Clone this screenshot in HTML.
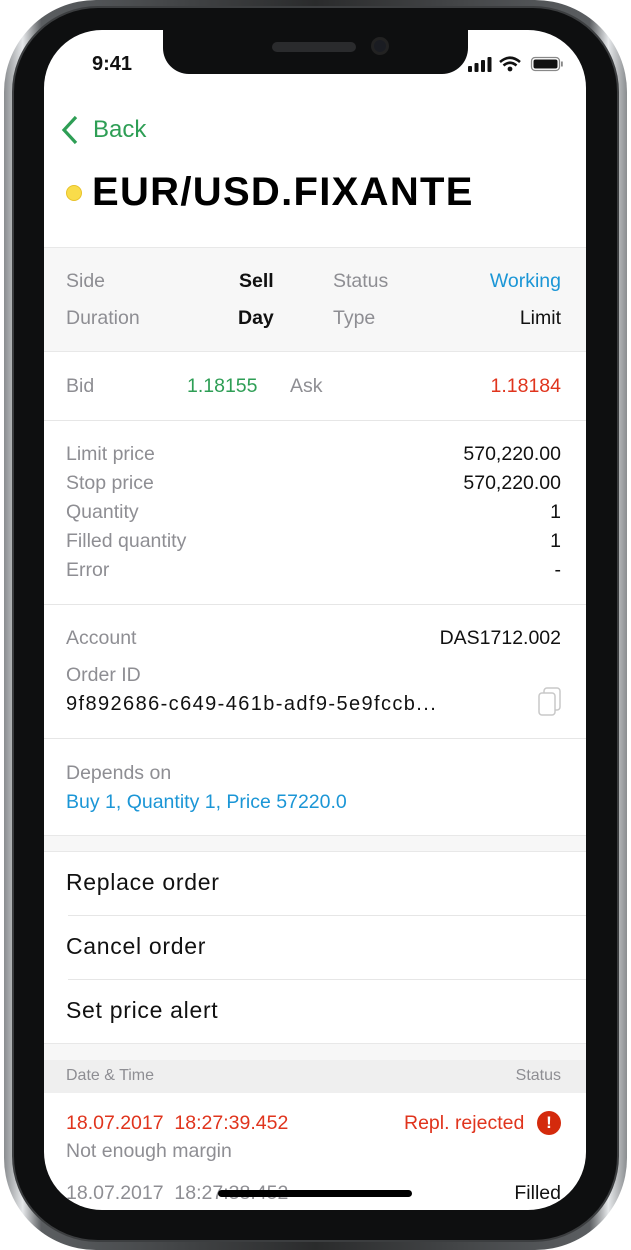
<!DOCTYPE html>
<html><head><meta charset="utf-8"><style>
*{margin:0;padding:0;box-sizing:border-box}
body{width:631px;height:1250px;background:#fff;position:relative;overflow:hidden;font-family:"Liberation Sans",sans-serif}
.a{position:absolute;white-space:nowrap}
#rim{position:absolute;left:4px;top:0;width:623px;height:1250px;border-radius:92px;background:linear-gradient(90deg,#8a8d90,#e6e8ea 3%,#5b5e61 6%,#2a2b2c 50%,#5b5e61 94%,#e6e8ea 97%,#8a8d90)}
#bez{position:absolute;left:12px;top:6px;width:607px;height:1236px;border-radius:86px;background:#0e0f10;border:2px solid #3c3e40}
#scr{position:absolute;left:44px;top:30px;width:542px;height:1180px;border-radius:58px;background:#fff;overflow:hidden}
.s{position:absolute;left:0;width:542px}
.l{color:#8e8e93;font-size:19.5px}
.v{color:#111;font-size:19.5px}
.line{position:absolute;height:1px;background:#e6e6e6}
</style></head><body>
<div id="rim"></div><div id="bez"></div>
<div id="scr">
 <div class="s" style="top:217px;height:105px;background:#f7f7f7;border-top:1px solid #e8e8e8;border-bottom:1px solid #e8e8e8"></div>
 <div class="line" style="left:0;width:542px;top:390px"></div>
 <div class="line" style="left:0;width:542px;top:574px"></div>
 <div class="line" style="left:0;width:542px;top:708px"></div>
 <div class="s" style="top:805px;height:17px;background:#f7f7f7;border-top:1px solid #e8e8e8;border-bottom:1px solid #e8e8e8"></div>
 <div class="line" style="left:24px;width:518px;top:885px"></div>
 <div class="line" style="left:24px;width:518px;top:949px"></div>
 <div class="s" style="top:1013px;height:17px;background:#f7f7f7;border-top:1px solid #e8e8e8"></div>
 <div class="s" style="top:1030px;height:33px;background:#efefef"></div>
</div>
<!-- notch -->
<div class="a" style="left:163px;top:28px;width:305px;height:46px;background:#0e0f10;border-radius:0 0 26px 26px"></div>
<div class="a" style="left:272px;top:42px;width:84px;height:10px;background:#2a2b2d;border-radius:5px"></div>
<div class="a" style="left:371px;top:37px;width:18px;height:18px;background:#1a1c22;border-radius:50%;border:3px solid #222"></div>
<!-- status bar -->
<div class="a" style="left:92px;top:53px;font-size:20px;font-weight:bold;color:#111">9:41</div>
<svg class="a" style="left:468px;top:55px" width="100" height="18" viewBox="0 0 100 18">
<rect x="0" y="11" width="4" height="6" rx="1" fill="#111"/><rect x="6.5" y="8" width="4" height="9" rx="1" fill="#111"/><rect x="13" y="5" width="4" height="12" rx="1" fill="#111"/><rect x="19.5" y="2" width="4" height="15" rx="1" fill="#111"/>
<path d="M32 7 Q42 -1.5 52 7 M35.5 10.5 Q42 5 48.5 10.5" stroke="#111" stroke-width="2.6" fill="none"/><circle cx="42" cy="14" r="2.4" fill="#111"/>
<rect x="63.5" y="2.5" width="28" height="13" rx="3.5" fill="none" stroke="#888" stroke-width="1.3"/><rect x="65.5" y="4.5" width="24" height="9" rx="2" fill="#111"/><rect x="93" y="6.5" width="1.8" height="5" fill="#888"/>
</svg>
<!-- header -->
<svg class="a" style="left:60px;top:115px" width="20" height="30" viewBox="0 0 20 30"><path d="M16 2 L4 15 L16 28" stroke="#2e9e55" stroke-width="3.2" fill="none"/></svg>
<div class="a" style="left:93px;top:116px;font-size:24px;color:#2e9e55">Back</div>
<div class="a" style="left:66px;top:185px;width:16px;height:16px;border-radius:50%;background:#f9dc4a;border:1px solid #e8c22a"></div>
<div class="a" style="left:92px;top:170px;font-size:40px;font-weight:bold;color:#000;letter-spacing:1.3px">EUR/USD.FIXANTE</div>
<!-- side -->
<div class="a l" style="left:66px;top:270px">Side</div>
<div class="a v" style="left:239px;top:270px;font-weight:bold">Sell</div>
<div class="a l" style="left:333px;top:270px">Status</div>
<div class="a" style="right:70px;top:270px;font-size:19.5px;color:#1b96d6">Working</div>
<div class="a l" style="left:66px;top:307px">Duration</div>
<div class="a v" style="left:238px;top:307px;font-weight:bold">Day</div>
<div class="a l" style="left:333px;top:307px">Type</div>
<div class="a v" style="right:70px;top:307px">Limit</div>
<!-- bid -->
<div class="a l" style="left:66px;top:375px">Bid</div>
<div class="a" style="left:187px;top:375px;font-size:19.5px;color:#2e9e55">1.18155</div>
<div class="a l" style="left:290px;top:375px">Ask</div>
<div class="a" style="right:70px;top:375px;font-size:19.5px;color:#e0341d">1.18184</div>
<!-- prices -->
<div class="a l" style="left:66px;top:443px">Limit price</div><div class="a v" style="right:70px;top:443px">570,220.00</div>
<div class="a l" style="left:66px;top:472px">Stop price</div><div class="a v" style="right:70px;top:472px">570,220.00</div>
<div class="a l" style="left:66px;top:501px">Quantity</div><div class="a v" style="right:70px;top:501px">1</div>
<div class="a l" style="left:66px;top:530px">Filled quantity</div><div class="a v" style="right:70px;top:530px">1</div>
<div class="a l" style="left:66px;top:559px">Error</div><div class="a v" style="right:70px;top:559px">-</div>
<!-- account -->
<div class="a l" style="left:66px;top:627px">Account</div><div class="a v" style="right:70px;top:627px">DAS1712.002</div>
<div class="a l" style="left:66px;top:664px">Order ID</div>
<div class="a v" style="left:66px;top:693px;font-size:20px;letter-spacing:1.4px">9f892686-c649-461b-adf9-5e9fccb...</div>
<svg class="a" style="left:537px;top:686px" width="26" height="32" viewBox="0 0 26 32"><rect x="7" y="2" width="16" height="22" rx="3" fill="#fff" stroke="#c8c8c8" stroke-width="1.5"/><rect x="2" y="7" width="16" height="22" rx="3" fill="#fff" stroke="#c8c8c8" stroke-width="1.5"/></svg>
<div class="a l" style="left:66px;top:762px">Depends on</div>
<div class="a" style="left:66px;top:791px;font-size:19.5px;color:#1b96d6">Buy 1, Quantity 1, Price 57220.0</div>
<!-- menu -->
<div class="a" style="left:66px;top:869px;font-size:23px;color:#111;letter-spacing:0.7px">Replace order</div>
<div class="a" style="left:66px;top:933px;font-size:23px;color:#111;letter-spacing:0.7px">Cancel order</div>
<div class="a" style="left:66px;top:997px;font-size:23px;color:#111;letter-spacing:0.7px">Set price alert</div>
<!-- history -->
<div class="a" style="left:66px;top:1067px;font-size:16px;color:#8e8e93">Date &amp; Time</div>
<div class="a" style="right:70px;top:1067px;font-size:16px;color:#8e8e93">Status</div>
<div class="a" style="left:66px;top:1112px;font-size:19.5px;color:#e0341d">18.07.2017&nbsp; 18:27:39.452</div>
<div class="a" style="left:404px;top:1112px;font-size:19.5px;color:#e0341d">Repl. rejected</div>
<div class="a" style="left:537px;top:1111px;width:24px;height:24px;border-radius:50%;background:#d42a0c;color:#fff;font-weight:bold;font-size:17px;text-align:center;line-height:24px">!</div>
<div class="a l" style="left:66px;top:1140px">Not enough margin</div>
<div class="a l" style="left:66px;top:1182px">18.07.2017&nbsp; 18:27:38.452</div>
<div class="a v" style="right:70px;top:1182px">Filled</div>
<div class="a" style="left:218px;top:1190px;width:194px;height:7px;border-radius:4px;background:#000"></div>
</body></html>
